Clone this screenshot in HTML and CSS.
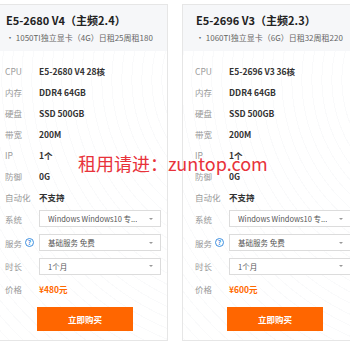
FILE: index.html
```html
<!DOCTYPE html>
<html>
<head>
<meta charset="utf-8">
<link rel="stylesheet" href="styles.css">
</head>
<body>
<div class="page">
  <div class="cards">
    <div class="card">
      <div class="card-head">
        <div class="title">E5-2680 V4（主频2.4）</div>
        <div class="sub">• 1050TI独立显卡（4G）日租25周租180</div>
      </div>
      <div class="card-body">
        <div class="row"><span class="lbl">CPU</span><span class="val">E5-2680 V4 28核</span></div>
        <div class="row"><span class="lbl">内存</span><span class="val">DDR4 64GB</span></div>
        <div class="row"><span class="lbl">硬盘</span><span class="val">SSD 500GB</span></div>
        <div class="row"><span class="lbl">带宽</span><span class="val">200M</span></div>
        <div class="row"><span class="lbl">IP</span><span class="val">1个</span></div>
        <div class="row"><span class="lbl">防御</span><span class="val">0G</span></div>
        <div class="row"><span class="lbl">自动化</span><span class="val">不支持</span></div>
        <div class="srow"><span class="lbl">系统</span><div class="sel"><span class="sel-text">Windows Windows10 专...</span><span class="caret"></span></div></div>
        <div class="srow"><span class="lbl">服务<span class="q">?</span></span><div class="sel"><span class="sel-text">基础服务 免费</span><span class="caret"></span></div></div>
        <div class="srow"><span class="lbl">时长</span><div class="sel"><span class="sel-text">1个月</span><span class="caret"></span></div></div>
        <div class="row price-row"><span class="lbl">价格</span><span class="price">¥480元</span></div>
        <div class="btn-wrap"><button class="buy">立即购买</button></div>
      </div>
    </div>
    <div class="card">
      <div class="card-head">
        <div class="title">E5-2696 V3（主频2.3）</div>
        <div class="sub">• 1060TI独立显卡（6G）日租32周租220</div>
      </div>
      <div class="card-body">
        <div class="row"><span class="lbl">CPU</span><span class="val">E5-2696 V3 36核</span></div>
        <div class="row"><span class="lbl">内存</span><span class="val">DDR4 64GB</span></div>
        <div class="row"><span class="lbl">硬盘</span><span class="val">SSD 500GB</span></div>
        <div class="row"><span class="lbl">带宽</span><span class="val">200M</span></div>
        <div class="row"><span class="lbl">IP</span><span class="val">1个</span></div>
        <div class="row"><span class="lbl">防御</span><span class="val">0G</span></div>
        <div class="row"><span class="lbl">自动化</span><span class="val">不支持</span></div>
        <div class="srow"><span class="lbl">系统</span><div class="sel"><span class="sel-text">Windows Windows10 专...</span><span class="caret"></span></div></div>
        <div class="srow"><span class="lbl">服务<span class="q">?</span></span><div class="sel"><span class="sel-text">基础服务 免费</span><span class="caret"></span></div></div>
        <div class="srow"><span class="lbl">时长</span><div class="sel"><span class="sel-text">1个月</span><span class="caret"></span></div></div>
        <div class="row price-row"><span class="lbl">价格</span><span class="price">¥600元</span></div>
        <div class="btn-wrap"><button class="buy">立即购买</button></div>
      </div>
    </div>
  </div>
  <div class="watermark">租用请进：zuntop.com</div>
</div>
</body>
</html>
```
FILE: styles.css
```css
* { box-sizing: border-box; }
html, body { margin: 0; padding: 0; background: #fff; }
body {
  width: 350px; height: 350px; overflow: hidden;
  font-family: "Noto Sans CJK SC", "Noto Sans", sans-serif;
  color: #333;
}
.page { position: relative; width: 350px; height: 350px; }
.cards {
  display: flex; gap: 14px;
  margin-left: -8px; padding-top: 4px;
}
.card {
  flex: 0 0 176px; width: 176px;
  border: 1px solid #e6e6e6;
  background: #fff;
}
.card-head {
  height: 46px;
  background: #f6f7f9;
  padding: 6px 0 0 13px;
}
.title {
  font-size: 11px; font-weight: 700; color: #222;
  line-height: 18px; white-space: nowrap;
}
.sub {
  font-size: 8px; color: #666; line-height: 14px; margin-top: 2px;
  white-space: nowrap; overflow: hidden;
}
.card-body {
  padding: 9px 6px 9px 12px;
  background:
    repeating-radial-gradient(circle at 160% 10%, rgba(255,255,255,0) 0 9px, rgba(200,205,215,0.10) 9px 10px);
}
.row {
  display: flex; align-items: center; height: 21px;
  font-size: 8.5px;
}
.lbl {
  flex: 0 0 34px; color: #999; font-size: 8.5px; white-space: nowrap;
  display: flex; align-items: center;
}
.val { font-weight: 700; color: #333; white-space: nowrap; }
.srow {
  display: flex; align-items: center; height: 23.7px;
}
.sel {
  flex: 1; height: 17px;
  border: 1px solid #dcdcdc; background: #fff;
  display: flex; align-items: center; justify-content: space-between;
  padding: 0 7px 0 8px;
  font-size: 7.5px; color: #555; white-space: nowrap;
}
.sel-text { overflow: hidden; }
.caret {
  width: 0; height: 0;
  border-left: 2.5px solid transparent; border-right: 2.5px solid transparent;
  border-top: 2.5px solid #999;
}
.q {
  display: inline-flex; align-items: center; justify-content: center;
  width: 9px; height: 9px; border-radius: 50%;
  border: 1px solid #3d8fe0; color: #3d8fe0;
  font-size: 6.5px; font-weight: 700; margin-left: 3px; line-height: 1;
}
.price-row { height: 22px; }
.price { color: #ff6a00; font-weight: 700; font-size: 8.5px; }
.btn-wrap { display: flex; padding: 7px 0 0 32px; }
.buy {
  width: 96px; height: 24px; border: 0; margin: 0;
  background: #ff6600; color: #fff;
  font-family: inherit; font-size: 8.5px; font-weight: 700;
}
.watermark {
  position: absolute; left: 78px; top: 151px;
  font-size: 18px; color: #e8323a; white-space: nowrap; line-height: 24px;
  font-family: "Noto Sans CJK SC", "Noto Sans", sans-serif;
}
```
